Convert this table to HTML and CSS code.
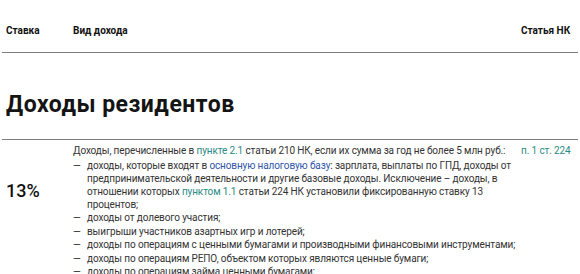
FILE: index.html
```html
<!DOCTYPE html>
<html lang="ru">
<head>
<meta charset="utf-8">
<link rel="stylesheet" href="styles.css">
</head>
<body>
<div class="table">
  <div class="thead">
    <div class="c-rate">Ставка</div>
    <div class="c-type">Вид дохода</div>
    <div class="c-art">Статья НК</div>
  </div>
  <h2 class="section">Доходы резидентов</h2>
  <div class="row">
    <div class="c-rate rate">13%</div>
    <div class="c-type body">
      <p class="lead">Доходы, перечисленные в <a class="g">пункте 2.1</a> статьи 210 НК, если их сумма за год не более 5&nbsp;млн руб.:</p>
      <ul class="list">
        <li>доходы, которые входят в <a class="b">основную налоговую базу</a>: зарплата, выплаты по ГПД, доходы от предпринимательской деятельности и другие базовые доходы. Исключение – доходы, в отношении которых <a class="g">пунктом 1.1</a> статьи 224 НК установили фиксированную ставку 13 процентов;</li>
        <li>доходы от долевого участия;</li>
        <li>выигрыши участников азартных игр и лотерей;</li>
        <li>доходы по операциям с ценными бумагами и производными финансовыми инструментами;</li>
        <li>доходы по операциям РЕПО, объектом которых являются ценные бумаги;</li>
        <li>доходы по операциям займа ценными бумагами;</li>
      </ul>
    </div>
    <div class="c-art"><a class="g">п. 1 ст. 224</a></div>
  </div>
</div>
</body>
</html>
```
FILE: styles.css
```css
* { box-sizing: border-box; }
html, body { margin: 0; padding: 0; background: #fff; }
body {
  font-family: Roboto, "Liberation Sans", sans-serif;
  color: #222;
}
.table { margin: 0 2px; }
.thead {
  display: grid;
  grid-template-columns: 67px 446px 1fr;
  padding: 24px 0 14px 4px;
  border-bottom: 1.5px solid #7d7d7d;
  font-size: 10px;
  font-weight: 700;
  color: #111;
  line-height: 14px;
}
.section {
  margin: 0;
  padding: 37px 0 20px 4px;
  font-size: 23px;
  line-height: 29px;
  font-weight: 700;
  letter-spacing: 0.5px;
  color: #141414;
  border-bottom: 1.5px solid #7d7d7d;
}
.row {
  display: grid;
  grid-template-columns: 67px 446px 1fr;
  padding: 4px 0 0 4px;
  font-size: 10px;
  line-height: 13px;
  letter-spacing: -0.12px;
  color: #333;
}
.rate {
  padding-top: 36px;
  font-size: 18px;
  line-height: 22px;
  letter-spacing: 0;
  font-weight: 500;
  color: #111;
}
.body p { margin: 0 0 2px; }
.list { list-style: none; margin: 0; padding: 0; }
.list li { position: relative; padding-left: 14px; margin-bottom: 0.4px; }
.list li::before { content: "—"; position: absolute; left: 0; top: 0; }
a { text-decoration: none; }
.g { color: #2a8a83; }
.b { color: #2f55a8; }
.c-art { padding-left: 2px; }
.c-art a { display: block; }
```
